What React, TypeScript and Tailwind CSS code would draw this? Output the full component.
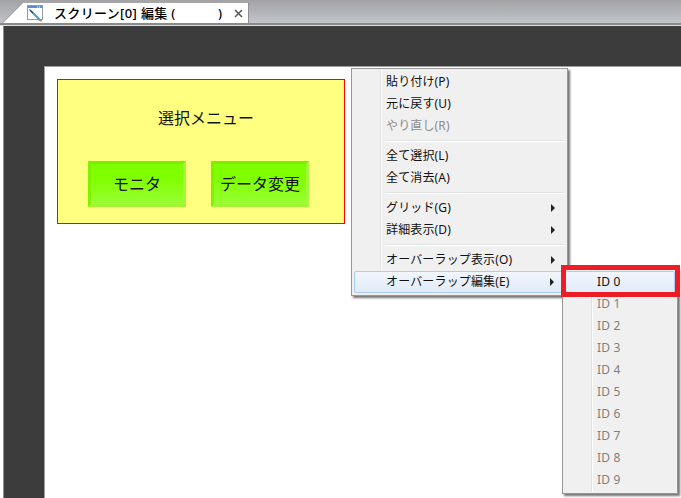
import React from 'react';

const font = "font-['Noto_Sans','Noto_Sans_CJK_JP',sans-serif]";

type Entry = { label: string; disabled?: boolean; arrow?: boolean; active?: boolean } | 'sep';

const mainMenu: Entry[] = [
  { label: '貼り付け(P)' },
  { label: '元に戻す(U)' },
  { label: 'やり直し(R)', disabled: true },
  'sep',
  { label: '全て選択(L)' },
  { label: '全て消去(A)' },
  'sep',
  { label: 'グリッド(G)', arrow: true },
  { label: '詳細表示(D)', arrow: true },
  'sep',
  { label: 'オーバーラップ表示(O)', arrow: true },
  { label: 'オーバーラップ編集(E)', arrow: true, active: true },
];

const ids = ['ID 0', 'ID 1', 'ID 2', 'ID 3', 'ID 4', 'ID 5', 'ID 6', 'ID 7', 'ID 8', 'ID 9'];

function TabIcon() {
  return (
    <svg width="17" height="17" viewBox="0 0 17 17" className="shrink-0">
      <rect x="0.5" y="0.5" width="15" height="14" fill="#ffffff" stroke="#8d9aab" />
      <rect x="1" y="1" width="14" height="2" fill="#5f8fca" />
      <path d="M10 2 H11 M12 2 H13" stroke="#ffffff" strokeWidth="1" />
      <path d="M3 5 L14 16" stroke="#4a9ad8" strokeWidth="2.2" />
      <path d="M2.4 4.6 L6 8.2" stroke="#24384f" strokeWidth="1" />
      <path d="M14 14.5 L16 16.5 L13 16 Z" fill="#e8833a" />
    </svg>
  );
}

function MenuArrow() {
  return <span className="w-0 h-0 border-y-[4px] border-y-transparent border-l-[4px] border-l-[#222222]" />;
}

function MainMenu() {
  return (
    <div className="absolute left-[351px] top-[68px] w-[217px] h-[228px] bg-[#f0f0f0] border border-[#979797] shadow-[2px_2px_2px_rgba(70,70,70,0.75)] p-[2px] flex flex-col">
      <div className="absolute left-[28px] top-[1px] bottom-[1px] w-[2px] bg-[linear-gradient(90deg,#e2e3e3_50%,#ffffff_50%)]" />
      {mainMenu.map((item, i) =>
        item === 'sep' ? (
          <div key={i} className="h-[8px] ml-[31px] flex items-center">
            <div className="w-full h-[2px] bg-[linear-gradient(180deg,#e2e3e3_50%,#ffffff_50%)]" />
          </div>
        ) : (
          <div
            key={i}
            className={
              'relative h-[22px] pr-[10px] flex items-center justify-between text-[12px] tracking-[0.15px] rounded-[2px] ' +
              (item.disabled ? 'text-[#8c8c8c] ' : 'text-[#111111] ') +
              (item.active ? 'pl-[31px] bg-[linear-gradient(180deg,#f2f6fd,#e1ebf8)] border border-[#aeccf1]' : 'pl-[32px]')
            }
          >
            <span>{item.label}</span>
            {item.arrow && <MenuArrow />}
          </div>
        ),
      )}
    </div>
  );
}

function SubMenu() {
  return (
    <div className="absolute left-[562px] top-[268px] w-[116px] h-[226px] bg-[#f0f0f0] border border-[#979797] shadow-[2px_2px_2px_rgba(70,70,70,0.75)] p-[2px] flex flex-col">
      <div className="absolute left-[28px] top-[1px] bottom-[1px] w-[2px] bg-[linear-gradient(90deg,#e2e3e3_50%,#ffffff_50%)]" />
      {ids.map((id, i) => (
        <div
          key={id}
          className={
            'relative h-[22px] flex items-center text-[12px] tracking-[0.2px] rounded-[2px] ' +
            (i === 0
              ? 'pl-[31px] text-[#111111] bg-[linear-gradient(180deg,#f2f6fd,#e1ebf8)] border border-[#aeccf1]'
              : 'pl-[32px] text-[#808080]')
          }
        >
          {id}
        </div>
      ))}
    </div>
  );
}

function GreenButton({ label }: { label: string }) {
  return (
    <div className="w-[98px] h-[46px] border-[3px] border-t-[#7af000] border-l-[#7cf400] border-r-[#a4f73a] border-b-[#a0f530] rounded-[1px] flex items-center justify-center text-[16px] text-[#111111] bg-[linear-gradient(180deg,#80ff00_35%,#99ff33)]">
      {label}
    </div>
  );
}

export default function App() {
  return (
    <div className={'w-[681px] h-[498px] relative overflow-hidden flex flex-col bg-white ' + font}>
      {/* tab strip */}
      <div className="h-[23px] shrink-0 pt-[3px] pl-[2px] bg-[linear-gradient(180deg,#a3a3a5,#c1c4cb)]">
        <div className="w-[247px] h-[20px] bg-[#8f8f8f] [clip-path:polygon(20px_0,100%_0,100%_100%,0_100%)]">
          <div className="w-[246px] h-[20px] pl-[25px] pt-px bg-white flex items-center [clip-path:polygon(21px_0,100%_0,100%_100%,1px_100%)]">
            <TabIcon />
            <span className="ml-[10px] w-[183px] text-[13px] tracking-[0.35px] font-medium text-black whitespace-pre">スクリーン[0] 編集 (</span>
            <span className="text-[13px] font-medium text-black w-[0px] -ml-[19px] mr-[19px]">)</span>
            <svg width="9" height="9" viewBox="0 0 9 9" className="shrink-0 -ml-[3px]">
              <path d="M1 1 L8 8 M8 1 L1 8" stroke="#555555" strokeWidth="1.5" />
            </svg>
          </div>
        </div>
      </div>
      <div className="h-[3px] shrink-0 bg-[linear-gradient(180deg,#8a8a8a_66%,#dcdcdc_66%)]" />

      {/* editor area */}
      <div className="flex-1 ml-[3px] border-l border-[#8f8f8f] bg-[#3c3c3c] pt-[40px] pl-[40px]">
        <div className="h-full bg-white border-t border-l border-[#a0a0a0] pt-[12px] pl-[12px]">
          <div className="w-[288px] h-[145px] bg-[#ffff80] border border-[#ff0000] flex flex-col">
            <div className="mt-[26px] ml-[100px] text-[16px] leading-[24px] text-[#111111]">選択メニュー</div>
            <div className="mt-[31px] ml-[30px] flex gap-[25px]">
              <GreenButton label="モニタ" />
              <GreenButton label="データ変更" />
            </div>
          </div>
        </div>
      </div>

      <MainMenu />
      <SubMenu />
      <div className="absolute left-[561px] top-[265px] w-[119px] h-[32px] border-[5px] border-[#ee1c25]" />
    </div>
  );
}
